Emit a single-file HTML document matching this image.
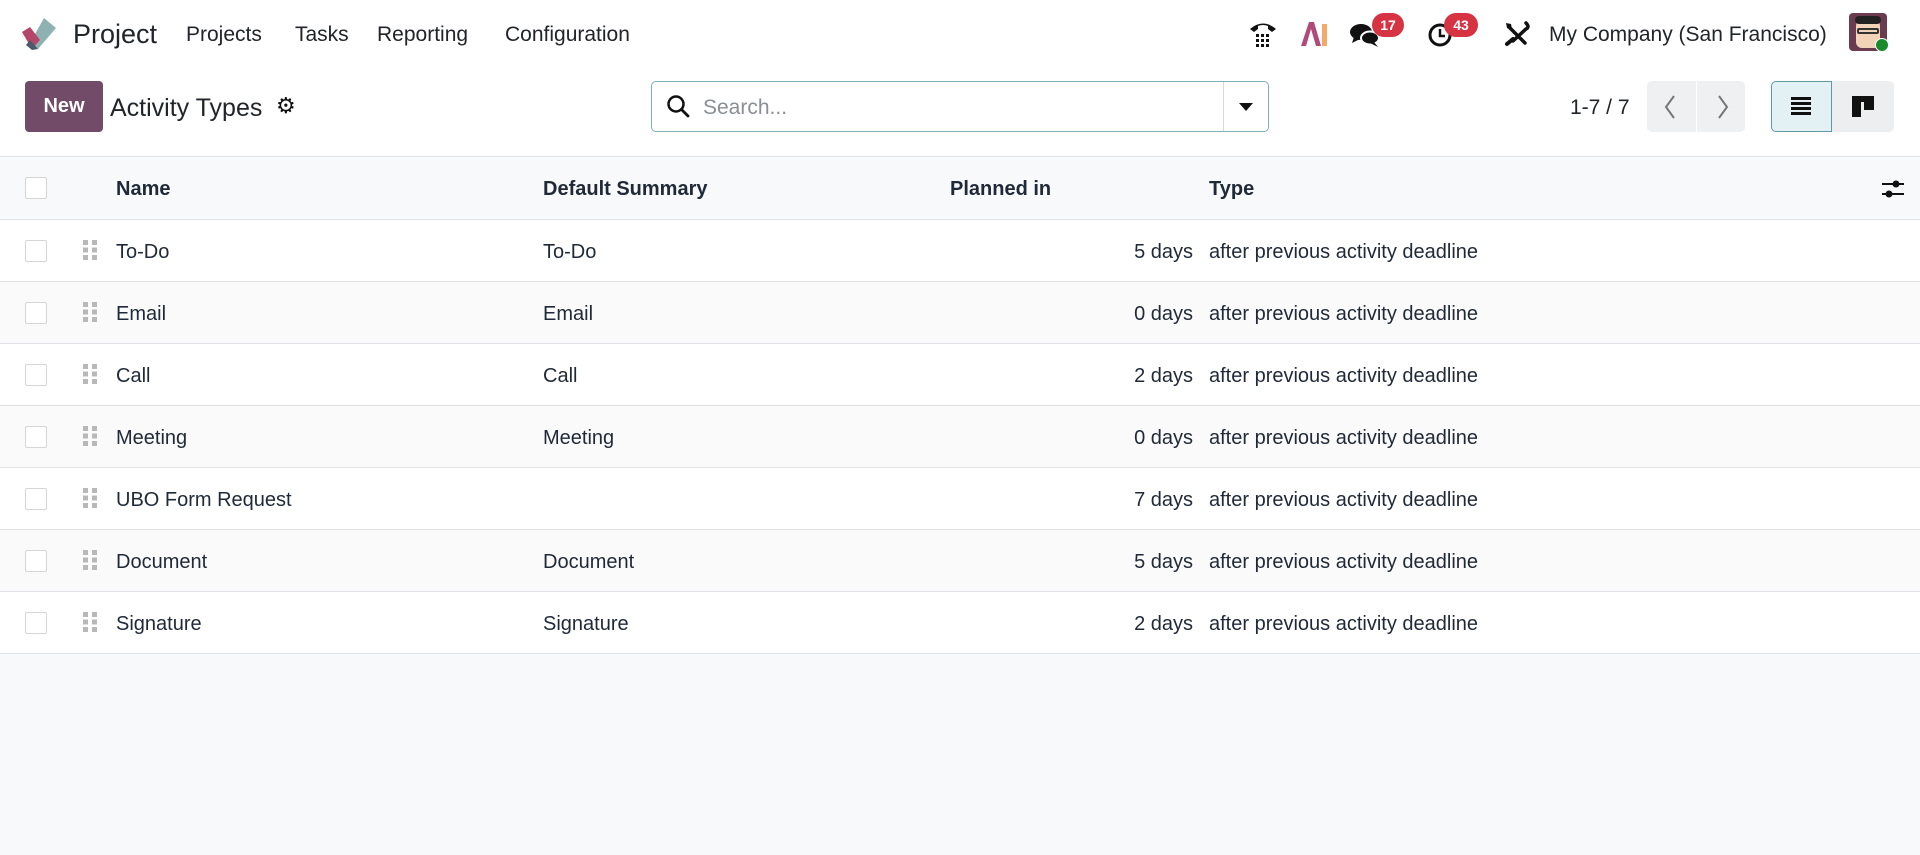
<!DOCTYPE html>
<html><head><meta charset="utf-8"><style>
*{box-sizing:border-box;margin:0;padding:0}
body{width:1920px;height:855px;background:#f8f9fa;font-family:"Liberation Sans",sans-serif;color:#1f2937;position:relative;overflow:hidden}
.top{position:absolute;left:0;top:0;width:1920px;height:157px;background:#fff;border-bottom:1px solid #dee2e6}
.a{position:absolute;white-space:nowrap}
.nav{font-size:21px;top:23px;color:#212529}
.badge{position:absolute;background:#d63343;color:#fff;font-size:14px;font-weight:bold;border-radius:12px;height:24px;line-height:24px;text-align:center}
.table{position:absolute;left:0;top:157px;width:1920px}
.row{position:relative;height:62px;border-bottom:1px solid #dee2e6;background:#fff;font-size:20px}
.row.alt{background:#fafafa}
.row.h{background:#f8f9fa;height:63px;font-weight:bold}
.row span{position:absolute;top:21px;white-space:nowrap}
.cb{position:absolute;left:25px;top:20px;width:22px;height:22px;border:1px solid #d6d6d6;background:#fff;border-radius:2px}
.dh{position:absolute;left:83px;top:20px;width:14px;height:20px;background:
linear-gradient(90deg,#b8b8b8 0 5px,transparent 5px 9px,#b8b8b8 9px 14px);
-webkit-mask:linear-gradient(#000 0 5px,transparent 5px 7.5px,#000 7.5px 12.5px,transparent 12.5px 15px,#000 15px 20px);
mask:linear-gradient(#000 0 5px,transparent 5px 7.5px,#000 7.5px 12.5px,transparent 12.5px 15px,#000 15px 20px)}
</style></head><body>
<div class="top">
<svg class="a" style="left:20px;top:16px" width="38" height="36" viewBox="0 0 38 36"><path d="M24 2 L36 12 L18 33 L10 27Z" fill="#8fb1b1"/><path d="M2 16 L10 11 L20 24 L12 33Z" fill="#b5466b"/><path d="M10 24 L18 33 L12 34 L6 29Z" fill="#4a5a6b"/></svg>
<div class="a" style="left:73px;top:19px;font-size:27px;color:#212529">Project</div>
<div class="a nav" style="left:186px">Projects</div>
<div class="a nav" style="left:295px">Tasks</div>
<div class="a nav" style="left:377px">Reporting</div>
<div class="a nav" style="left:505px">Configuration</div>

<svg class="a" style="left:1249px;top:20px" width="28" height="27" viewBox="0 0 28 27"><path d="M1 9 Q14 -2 27 9 L23 12 L19 9 L19 6 Q14 4 9 6 L9 9 L5 12Z" fill="#111"/><g fill="#111"><rect x="7" y="14" width="3" height="3"/><rect x="12" y="14" width="3" height="3"/><rect x="17" y="14" width="3" height="3"/><rect x="7" y="19" width="3" height="3"/><rect x="12" y="19" width="3" height="3"/><rect x="17" y="19" width="3" height="3"/><rect x="7" y="24" width="3" height="3"/><rect x="12" y="24" width="3" height="3"/><rect x="17" y="24" width="3" height="3"/></g></svg>
<svg class="a" style="left:1300px;top:21px" width="28" height="26" viewBox="0 0 28 26"><path d="M1 25 L9 1 L14 1 L21 25 L16 25 L11 8 L6 25Z" fill="#b04a7a"/><rect x="22" y="3" width="5" height="22" fill="#f5a86a"/></svg>
<svg class="a" style="left:1350px;top:22px" width="30" height="26" viewBox="0 0 30 26"><ellipse cx="11" cy="10" rx="11" ry="8" fill="#111"/><path d="M4 15 L2 21 L10 17Z" fill="#111"/><ellipse cx="20" cy="16" rx="9" ry="6.5" fill="#111" stroke="#fff" stroke-width="2"/><path d="M24 20 L28 25 L20 21Z" fill="#111"/></svg>
<div class="badge" style="left:1372px;top:13px;width:32px">17</div>
<svg class="a" style="left:1428px;top:22px" width="26" height="26" viewBox="0 0 26 26"><circle cx="12" cy="13" r="10" fill="none" stroke="#111" stroke-width="3"/><path d="M12 7 V14 H17" stroke="#111" stroke-width="2.5" fill="none"/></svg>
<div class="badge" style="left:1444px;top:13px;width:34px">43</div>
<svg class="a" style="left:1504px;top:21px" width="26" height="26" viewBox="0 0 26 26"><path d="M5 6 L21 22" stroke="#111" stroke-width="3.5" stroke-linecap="round"/><path d="M2 2 L7 3 L8 8 L3 7Z" fill="#111"/><path d="M22 2 Q26 6 22 8 L9 20" stroke="#111" stroke-width="3.5" fill="none" stroke-linecap="round"/><path d="M3 23 L9 18" stroke="#111" stroke-width="4" stroke-linecap="round"/></svg>
<div class="a nav" style="left:1549px">My Company (San Francisco)</div>
<div class="a" style="left:1849px;top:13px;width:38px;height:38px;border-radius:4px;background:#6b3b50"></div>
<div class="a" style="left:1856px;top:20px;width:24px;height:28px;border-radius:6px;background:#f2d3b8"></div>
<div class="a" style="left:1855px;top:16px;width:26px;height:8px;border-radius:4px;background:#222"></div>
<div class="a" style="left:1857px;top:28px;width:22px;height:6px;border:2px solid #333;border-radius:2px"></div>
<div class="a" style="left:1875px;top:38px;width:14px;height:14px;border-radius:7px;background:#1a8a2a;border:1px solid #fff"></div>

<div class="a" style="left:25px;top:81px;width:78px;height:51px;background:#714b67;border-radius:4px;color:#fff;font-weight:bold;font-size:20px;line-height:51px;text-align:center">New</div>
<div class="a" style="left:110px;top:94px;font-size:25px;color:#212529">Activity Types</div>
<div class="a" style="left:276px;top:94px;font-size:22px;color:#111;font-family:'DejaVu Sans',sans-serif">⚙</div>
<div class="a" style="left:651px;top:81px;width:618px;height:51px;border:1px solid #7ab0b8;border-radius:5px;background:#fff"></div>
<div class="a" style="left:1223px;top:82px;width:1px;height:49px;background:#d6dadd"></div>
<svg class="a" style="left:666px;top:94px" width="25" height="25" viewBox="0 0 25 25"><circle cx="10" cy="10" r="7.5" fill="none" stroke="#111" stroke-width="2.5"/><path d="M15.5 15.5 L22 22" stroke="#111" stroke-width="2.8" stroke-linecap="round"/></svg>
<div class="a" style="left:703px;top:96px;font-size:21px;color:#8a8f95">Search...</div>
<div class="a" style="left:1239px;top:103px;width:0;height:0;border-left:7px solid transparent;border-right:7px solid transparent;border-top:8px solid #111"></div>
<div class="a" style="left:1570px;top:96px;font-size:21px;color:#212529">1-7 / 7</div>
<div class="a" style="left:1647px;top:81px;width:98px;height:51px;background:#eef0f2;border-radius:5px"></div>
<div class="a" style="left:1696px;top:81px;width:1px;height:51px;background:#fff"></div>
<svg class="a" style="left:1662px;top:94px" width="70" height="26" viewBox="0 0 70 26"><path d="M12 2 L4 13 L12 24" stroke="#777" stroke-width="2" fill="none"/><path d="M57 2 L65 13 L57 24" stroke="#777" stroke-width="2" fill="none"/></svg>
<div class="a" style="left:1771px;top:81px;width:123px;height:51px;background:#eceef0;border-radius:5px"></div>
<div class="a" style="left:1771px;top:81px;width:61px;height:51px;background:#e4f1f4;border:1px solid #5e9aa6;border-radius:5px 0 0 5px"></div>
<div class="a" style="left:1791px;top:97px;width:20px;height:18px;background:repeating-linear-gradient(#111 0 3px,transparent 3px 5px)"></div>
<div class="a" style="left:1852px;top:96px;width:22px;height:6px;background:#111"></div>
<div class="a" style="left:1852px;top:96px;width:9px;height:21px;background:#111"></div>
<div class="a" style="left:1864px;top:96px;width:10px;height:14px;background:#111"></div>
</div>

<div class="table">
<div class="row h"><div class="cb"></div><span style="left:116px">Name</span><span style="left:543px">Default Summary</span><span style="left:950px">Planned in</span><span style="left:1209px">Type</span>
<svg class="a" style="left:1881px;top:22px" width="24" height="20" viewBox="0 0 24 20"><path d="M1 5 H23 M1 15 H23" stroke="#111" stroke-width="2"/><circle cx="15" cy="5" r="3.5" fill="#111"/><circle cx="8" cy="15" r="3.5" fill="#111"/></svg></div>
<div class="row"><div class="cb"></div><div class="dh"></div><span style="left:116px">To-Do</span><span style="left:543px">To-Do</span><span style="right:727px">5 days</span><span style="left:1209px">after previous activity deadline</span></div>
<div class="row alt"><div class="cb"></div><div class="dh"></div><span style="left:116px">Email</span><span style="left:543px">Email</span><span style="right:727px">0 days</span><span style="left:1209px">after previous activity deadline</span></div>
<div class="row"><div class="cb"></div><div class="dh"></div><span style="left:116px">Call</span><span style="left:543px">Call</span><span style="right:727px">2 days</span><span style="left:1209px">after previous activity deadline</span></div>
<div class="row alt"><div class="cb"></div><div class="dh"></div><span style="left:116px">Meeting</span><span style="left:543px">Meeting</span><span style="right:727px">0 days</span><span style="left:1209px">after previous activity deadline</span></div>
<div class="row"><div class="cb"></div><div class="dh"></div><span style="left:116px">UBO Form Request</span><span style="right:727px">7 days</span><span style="left:1209px">after previous activity deadline</span></div>
<div class="row alt"><div class="cb"></div><div class="dh"></div><span style="left:116px">Document</span><span style="left:543px">Document</span><span style="right:727px">5 days</span><span style="left:1209px">after previous activity deadline</span></div>
<div class="row"><div class="cb"></div><div class="dh"></div><span style="left:116px">Signature</span><span style="left:543px">Signature</span><span style="right:727px">2 days</span><span style="left:1209px">after previous activity deadline</span></div>
</div>
</body></html>
